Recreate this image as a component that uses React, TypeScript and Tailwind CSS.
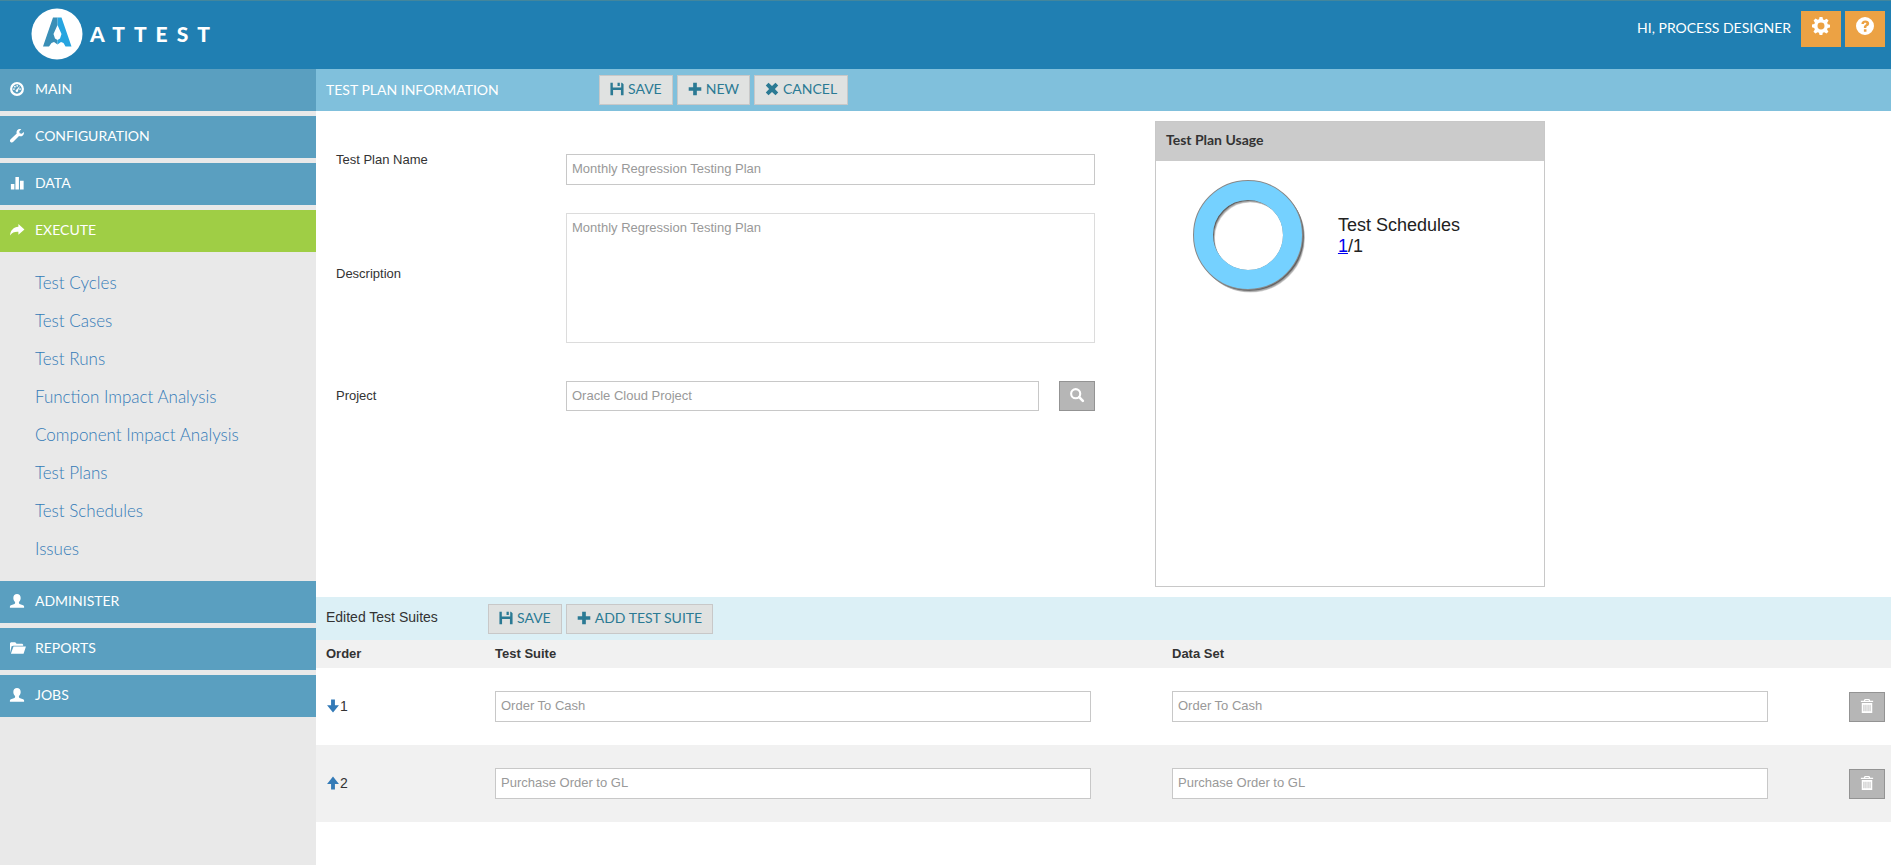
import React from 'react';

type IconProps = { name: string; className?: string };

// 16x16 glyphs, filled with the current text colour
const icons: Record<string, React.ReactNode> = {
  dashboard: (
    <>
      <circle cx="8" cy="8" r="6.7" fill="none" stroke="currentColor" strokeWidth="2.500" />
      <circle cx="4.500" cy="8" r="1" />
      <circle cx="5.600" cy="5.300" r="1" />
      <circle cx="8.200" cy="4.300" r="1" />
      <circle cx="11.500" cy="8" r="1" />
      <path d="M11.500 4.400 9.300 9.500a1.500 1.500 0 1 1-1.800-1z" />
    </>
  ),
  wrench: (
    <path d="M15.800 3.300 13.400 5.300 11 4.900 10.600 2.600 12.900.4C10.900-.3 8.900.2 7.900 2c-.6 1.100-.5 2.200-.2 3.200L.7 11.600c-1 .9-1 2.300-.1 3.200.9.9 2.300.9 3.200-.1L10.300 8.100c1.400.5 3.200.3 4.300-.7 1.200-1.100 1.600-2.800 1.200-4.100z" />
  ),
  stats: <path d="M1 9h4v6.500H1zM6.200 1h4v14.500h-4zM11.400 5.500h4.200v10h-4.200z" />,
  share: <path d="M9.600 1 16.500 7.300l-6.900 6V10C5.500 9.700 2.500 10.700 0 14.300.4 8.700 4 4.800 9.600 4.400z" />,
  user: (
    <path d="M8 0c2.500 0 4.200 1.700 4.200 4.500 0 1.800-.8 3.600-2 4.500v1.300c0 .5.300.8.700 1l4 1.500c.8.300 1.200.8 1.200 1.600v1.400H-.1v-1.400c0-.8.4-1.300 1.200-1.600l4-1.500c.4-.2.700-.5.700-1V9c-1.200-.9-2-2.700-2-4.500C3.800 1.700 5.500 0 8 0z" />
  ),
  folder: (
    <path d="M0 13.500V2.500l1-1h5l1.500 1.500h6.500l1 1v1.300H3.700L1.800 6zM4 6.300h14.200L15.500 14.500H1z" />
  ),
  save: <path d="M.5.800h2.700v5.400h9.600V.8h.9L15.500 2.600V15.200h-3V9.200h-9v6h-3zM8.600.8h2.600v3.800H8.600z" />,
  plus: <path d="M5.900.8h4.200v5.100h5.100v4.200h-5.100v5.100H5.900v-5.100H.8V5.900h5.100z" />,
  remove: <path d="M4 .9 8 4.700l4-3.800L15.100 4 11.300 8l3.800 4L12 15.100l-4-3.800-4 3.800L.9 12l3.800-4L.9 4z" />,
  search: (
    <>
      <circle cx="6.500" cy="6.500" r="5.200" fill="none" stroke="currentColor" strokeWidth="2.400" />
      <path d="m10.500 10.500 4.200 4.200" stroke="currentColor" strokeWidth="3" strokeLinecap="round" />
    </>
  ),
  cog: (
    <path
      fillRule="evenodd"
      d="M6.700 0h2.600l.5 2.200 1.200.5 2-1.200 1.700 1.700-1.200 2 .5 1.300 2 .3v2.500l-2.100.5-.5 1.200 1.200 2-1.700 1.700-2-1.200-1.300.5L9.200 16H6.700l-.5-2-1.200-.5-2 1.200L1.300 13l1.200-2L2 9.700 0 9.200V6.700l2.100-.5.500-1.200-1.200-2L3.100 1.300l2 1.200L6.300 2zM8 4.900a3.100 3.100 0 1 0 0 6.200 3.100 3.100 0 0 0 0-6.200z"
    />
  ),
  help: (
    <path
      fillRule="evenodd"
      d="M8 0a8 8 0 1 1 0 16A8 8 0 0 1 8 0zM4.800 6.200h2.300c0-.8.4-1.200 1.100-1.200.6 0 1 .3 1 .8 0 .6-.4.8-1.100 1.300-.8.5-1.100 1.100-1.100 2.100v.5h2.200v-.4c0-.6.4-.8 1-1.200.9-.6 1.500-1.300 1.500-2.400C11.700 4 10.300 3 8.300 3 6.100 3 4.900 4.200 4.800 6.200zM7 10.900v2.200h2.300v-2.200z"
    />
  ),
  down: <path d="M5.800.500h4.400V7h4.600L8 15.500 1.200 7h4.600z" />,
  up: <path d="M5.800 15.500h4.400V9h4.600L8 .5 1.200 9h4.600z" />,
  trash: (
    <path
      fillRule="evenodd"
      d="M5.500 0h5l1 1v1H15v1.500H1V2h3.500V1zM6 1v1h4V1zM2 4.500h12V16H2zM4 6.500V14h1V6.500zm2.300 0V14h1V6.500zm2.400 0V14h1V6.500zm2.300 0V14h1V6.500z"
    />
  ),
};

function Icon({ name, className = 'size-3.5' }: IconProps) {
  return (
    <svg viewBox="0 0 16 16" fill="currentColor" overflow="visible" aria-hidden="true" className={`shrink-0 ${className}`}>
      {icons[name]}
    </svg>
  );
}

const topMenu = [
  { label: 'MAIN', icon: 'dashboard' },
  { label: 'CONFIGURATION', icon: 'wrench' },
  { label: 'DATA', icon: 'stats' },
  { label: 'EXECUTE', icon: 'share', active: true },
];

const bottomMenu = [
  { label: 'ADMINISTER', icon: 'user' },
  { label: 'REPORTS', icon: 'folder' },
  { label: 'JOBS', icon: 'user' },
];

const executeLinks = [
  'Test Cycles',
  'Test Cases',
  'Test Runs',
  'Function Impact Analysis',
  'Component Impact Analysis',
  'Test Plans',
  'Test Schedules',
  'Issues',
];

const suites = [
  { order: 1, move: 'down', suite: 'Order To Cash', dataSet: 'Order To Cash' },
  { order: 2, move: 'up', suite: 'Purchase Order to GL', dataSet: 'Purchase Order to GL' },
];

const inputClass = 'block border border-[#c8c8c8] bg-white px-[5px] pb-0.5 text-[13px] text-[#999] outline-none';

function MenuItem({ label, icon, active }: { label: string; icon: string; active?: boolean }) {
  return (
    <button
      type="button"
      className={`flex h-[42px] w-full items-center gap-[11px] pb-0.5 pl-2.5 text-left font-[Lato] text-sm text-white ${active ? 'bg-[#9fce45]' : 'bg-[#5a9fc0]'}`}
    >
      <Icon name={icon} />
      {label}
    </button>
  );
}

function ToolButton({ icon, children }: { icon: string; children: React.ReactNode }) {
  return (
    <button
      type="button"
      className="flex h-[30px] items-center gap-1 border border-[#c8c8c8] bg-[#e0e2e1] px-2.5 pb-0.5 font-[Lato] text-sm text-[#2b7a94]"
    >
      <Icon name={icon} />
      {children}
    </button>
  );
}

function GreyButton({ icon, label }: { icon: string; label: string }) {
  return (
    <button
      type="button"
      aria-label={label}
      className="flex h-[30px] w-9 shrink-0 items-center justify-center border border-[#939393] bg-[#b6b6b6] pb-0.5 text-white"
    >
      <Icon name={icon} />
    </button>
  );
}

function Logo() {
  return (
    <div className="flex items-center gap-[7px]">
      <svg viewBox="0 0 52 52" className="size-[52px]" aria-hidden="true">
        <circle cx="26" cy="26" r="25.500" fill="#fff" />
        <path d="M22 9.500h4.500V17l-4 9 1.500 4.500 2.500 1.500v4.500L23 34l-2.500 1-2.500 3.500h-6z" fill="#3a8fb7" />
        <path d="M26.500 9.500h4L40.500 38.500h-6L32.500 35l-2.500-1-3.500 2.500V32l2.500-1.500L30.500 26l-4-9z" fill="#27a5e0" />
      </svg>
      <span className="pb-0.5 font-[Lato] text-[21px] leading-none font-black tracking-[9px] text-white">ATTEST</span>
    </div>
  );
}

export default function App() {
  return (
    <div className="flex min-h-screen flex-col bg-white font-['Liberation_Sans',Arial,sans-serif] text-[13px] text-[#333]">
      <header className="flex h-[69px] items-start justify-between border-t border-[#43869c] bg-[#207fb2] pr-1.5 pl-[31px]">
        <div className="pt-[7px]">
          <Logo />
        </div>
        <div className="flex items-start gap-1 pt-2.5">
          <span className="pt-[5px] pr-1.5 font-[Lato] text-sm leading-6 text-white">HI, PROCESS DESIGNER</span>
          <button type="button" aria-label="Settings" className="flex h-9 w-10 justify-center bg-[#eca244] pt-1.5 text-white">
            <Icon name="cog" className="size-[18px]" />
          </button>
          <button type="button" aria-label="Help" className="flex h-9 w-10 justify-center bg-[#eca244] pt-1.5 text-white">
            <Icon name="help" className="size-[18px]" />
          </button>
        </div>
      </header>

      <div className="flex flex-1">
        <nav className="w-[316px] shrink-0 bg-[#e9e9e9]">
          <div className="flex flex-col gap-[5px]">
            {topMenu.map((item) => (
              <MenuItem key={item.label} {...item} />
            ))}
          </div>
          <ul className="pt-3 pb-[13px]">
            {executeLinks.map((link) => (
              <li key={link}>
                <a href="#" className="block pl-[35px] font-[Lato] text-[17px] leading-[38px] font-light text-[#337ab7]">
                  {link}
                </a>
              </li>
            ))}
          </ul>
          <div className="flex flex-col gap-[5px]">
            {bottomMenu.map((item) => (
              <MenuItem key={item.label} {...item} />
            ))}
          </div>
        </nav>

        <main className="min-w-0 flex-1">
          <div className="flex h-[42px] items-center bg-[#80c0dc] pl-2.5">
            <h1 className="w-[273px] font-[Lato] text-sm text-white">TEST PLAN INFORMATION</h1>
            <div className="flex gap-1">
              <ToolButton icon="save">SAVE</ToolButton>
              <ToolButton icon="plus">NEW</ToolButton>
              <ToolButton icon="remove">CANCEL</ToolButton>
            </div>
          </div>

          <section className="flex gap-[60px] pt-2.5 pb-2.5 pl-5">
            <form className="w-[calc(49%-3px)] pt-[33px]">
              <div className="flex">
                <label htmlFor="plan-name" className="w-[230px] shrink-0 leading-3">Test Plan Name</label>
                <input id="plan-name" defaultValue="Monthly Regression Testing Plan" className={`h-[31px] min-w-0 flex-1 ${inputClass}`} />
              </div>
              <div className="mt-7 flex items-center">
                <label htmlFor="plan-description" className="w-[230px] shrink-0 pb-2">Description</label>
                <textarea
                  id="plan-description"
                  defaultValue="Monthly Regression Testing Plan"
                  className="block h-[130px] min-w-0 flex-1 resize-none border border-[#dcdcdc] px-[5px] pt-[5px] text-[13px] leading-[18px] text-[#999] outline-none"
                />
              </div>
              <div className="mt-[38px] flex items-center">
                <label htmlFor="plan-project" className="w-[230px] shrink-0">Project</label>
                <input id="plan-project" defaultValue="Oracle Cloud Project" className={`mr-5 h-[30px] min-w-0 flex-1 ${inputClass}`} />
                <GreyButton icon="search" label="Search project" />
              </div>
            </form>

            <aside className="h-[466px] w-[390px] shrink-0 border border-[#c8c8c8]">
              <h2 className="h-[39px] bg-[#cbcbcb] pl-2.5 font-[Lato] text-sm leading-[36px] font-bold">Test Plan Usage</h2>
              <div className="flex items-center gap-8 pt-[18px] pl-9">
                <svg viewBox="0 0 114 114" className="size-[114px]" aria-hidden="true">
                  <g fill="none" stroke="#000" strokeWidth="19">
                    <circle cx="58.500" cy="59" r="45" strokeOpacity=".15" />
                    <circle cx="58" cy="58.500" r="45" strokeOpacity=".2" />
                    <circle cx="57.500" cy="57.500" r="45" strokeOpacity=".25" />
                    <circle cx="57" cy="57" r="45" strokeOpacity=".3" />
                    <circle cx="56" cy="56" r="45" stroke="#888" strokeWidth="20" />
                    <circle cx="56" cy="56" r="44.500" stroke="#75d1ff" />
                  </g>
                </svg>
                <div className="text-lg leading-[21px] text-[#222]">
                  <div>Test Schedules</div>
                  <div>
                    <a href="#" className="text-[#0000ee] underline">1</a>/1
                  </div>
                </div>
              </div>
            </aside>
          </section>

          <section>
            <div className="flex h-[43px] items-center bg-[#dcf0f6] pl-2.5">
              <h2 className="w-[162px] pb-1 text-sm">Edited Test Suites</h2>
              <div className="flex gap-1">
                <ToolButton icon="save">SAVE</ToolButton>
                <ToolButton icon="plus">ADD TEST SUITE</ToolButton>
              </div>
            </div>
            <table className="w-full table-fixed text-left">
              <thead>
                <tr className="h-7 bg-[#f1f1f1]">
                  <th className="w-[169px] pl-2.5">Order</th>
                  <th className="pl-2.5">Test Suite</th>
                  <th className="pl-2.5">Data Set</th>
                  <th className="w-[52px]" aria-label="Actions"></th>
                </tr>
              </thead>
              <tbody>
                {suites.map((row) => (
                  <tr key={row.order} className="h-[77px] even:bg-[#f1f1f1]">
                    <td className="pl-2.5">
                      <div className="flex items-center pb-0.5 text-sm">
                        <a href="#" aria-label={`Move ${row.move}`} className="text-[#337ab7]">
                          <Icon name={row.move} />
                        </a>
                        {row.order}
                      </div>
                    </td>
                    <td className="pr-[71px] pl-2.5">
                      <input aria-label="Test Suite" defaultValue={row.suite} className={`h-[31px] w-full ${inputClass}`} />
                    </td>
                    <td className="pr-[71px] pl-2.5">
                      <input aria-label="Data Set" defaultValue={row.dataSet} className={`h-[31px] w-full ${inputClass}`} />
                    </td>
                    <td className="pl-2.5">
                      <GreyButton icon="trash" label="Delete" />
                    </td>
                  </tr>
                ))}
              </tbody>
            </table>
          </section>
        </main>
      </div>
    </div>
  );
}
